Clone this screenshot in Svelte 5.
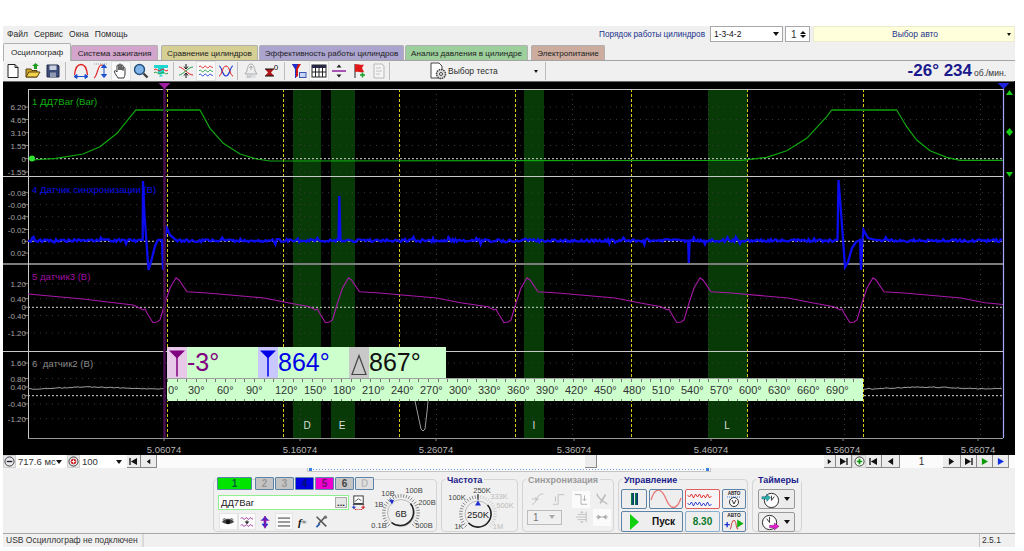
<script lang="ts">
    // Seeded noise so the traces look the same on every run
    let seed = 20531;
    function rnd(): number {
        seed = (seed * 1664525 + 1013904223) % 4294967296;
        return seed / 4294967296;
    }

    const toPoints = (list: number[][]) => list.map(([x, y]) => `${x.toFixed(1)},${y.toFixed(1)}`).join(" ");

    const channels = [
        { name: "1 ДД7Bar (Bar)", color: "#10b010", labelY: 105, base: 158.7,
          ticks: [[6.2, 107], [4.65, 119.5], [3.1, 132.7], [1.55, 145.5], [0, 158.7], [-1.55, 172]] },
        { name: "4 Датчик синхронизации (В)", color: "#0c0ce8", labelY: 193, base: 241.3,
          ticks: [[-0.08, 192.7], [-0.06, 204.7], [-0.04, 216.7], [-0.02, 229.5], [0, 241.3], [0.02, 253.2]] },
        { name: "5 датчик3 (В)", color: "#a010a0", labelY: 280, base: 307.3,
          ticks: [[1.2, 283.7], [0.4, 298.7], [0, 307.3], [-0.4, 315.5], [-1.2, 333]] },
        { name: "6\u00a0\u00a0датчик2 (В)", color: "#8a8a8a", labelY: 367, base: 395.7,
          ticks: [[1.6, 363], [0.8, 378.5], [0.4, 387], [0, 395.7], [-0.4, 404], [-1.2, 418.7]] }
    ];

    const tickLabel = (v: number) => (v === 0 ? "0" : v.toFixed(2));

    const greenLine = toPoints([
        [32, 160], [56, 158.3], [83, 154], [100, 146.7], [117, 133.3], [135.7, 110], [200, 110], [210, 128.3],
        [223.3, 143.3], [240, 154], [256.7, 159], [270, 161], [294, 161], [742, 160.3], [766.7, 157.3], [786.7, 150.7],
        [806.7, 138.3], [826.7, 116.7], [831.7, 110], [896.7, 110], [906.7, 126.7], [916.7, 140], [930, 150.7],
        [946.7, 157.3], [960, 160.3], [1003, 160.3]
    ]);

    // Sync channel: a noisy flat line, broken by the spikes listed here
    const spikes = [
        { from: 142, to: 176, pts: [[142.7, 240], [143, 181], [144.5, 215], [148.5, 270], [151, 262], [155, 246], [158, 240], [162, 240], [163, 270], [165, 238], [167, 228], [170, 235], [176, 240]] },
        { from: 338, to: 342, pts: [[338.5, 240], [339.3, 196], [340.5, 240]] },
        { from: 688, to: 691, pts: [[688.2, 241], [688.8, 263], [689.6, 241]] },
        { from: 837, to: 876, pts: [[837.5, 240], [838.5, 180], [840.5, 205], [845, 267], [848, 262], [852, 248], [856, 242], [860, 240], [861, 270], [862.5, 240], [863.5, 230], [868, 238], [876, 240]] }
    ];
    function blueLine(): string {
        const list: number[][] = [];
        let x = 28;
        while (x < 1003) {
            const spike = spikes.find((s) => x >= s.from && x < s.to);
            if (spike) {
                list.push(...spike.pts);
                x = spike.to;
                continue;
            }
            const kick = rnd() > 0.93 ? 3 : 1;
            list.push([x, 240.6 + (rnd() - 0.5) * 2.8 * kick]);
            x += 1.4;
        }
        return toPoints(list);
    }
    const syncLine = blueLine();

    const magentaLine = (() => {
        const list: number[][] = [[28, 294], [83, 299], [133, 305]];
        for (const t of [154, 326.5, 505, 678, 851]) {
            for (const [dx, y] of [[-17, 306.7], [-11, 310], [-9, 309], [-7, 313], [-1, 322.7], [3, 322], [6, 320], [11, 303], [16, 288], [22, 277.7], [25, 280], [33, 291.7], [53, 293], [110, 298]]) {
                list.push([t + dx, y]);
            }
            list.push([t + 134, 302.7]);
        }
        list.push([1003, 304.5]);
        return toPoints(list.filter((p) => p[0] <= 1003));
    })();

    function greyLine(from: number, to: number): string {
        const list: number[][] = [];
        for (let x = from; x < to; x += 2) {
            list.push([x, 388 + Math.sin(x / 19) * 0.9 + (rnd() - 0.5) * 0.9]);
        }
        return toPoints(list);
    }
    const greyLeft = greyLine(28, 166);
    const greyRight = greyLine(864, 1003);

    const cylinderLines = [167.5, 283.5, 399.5, 515.5, 631.5, 747.5, 863.5];
    const gridLines = [300.5, 436.5, 572.5, 708.5, 844.5, 980.5];
    const bands = [[293, 28, "D", 307], [331, 24, "E", 342], [524, 20, "I", 534], [708, 39.5, "L", 727]];
    const timeLabels = [[164, "5.06074"], [300, "5.16074"], [436, "5.26074"], [574, "5.36074"], [711, "5.46074"], [843, "5.56074"], [978, "5.66074"]];

    const degrees = Array.from({ length: 24 }, (_, i) => `${i * 30}°`);
    const tabs = [
        ["Осциллограф", "active"], ["Система зажигания", "plum"], ["Сравнение цилиндров", "olive"],
        ["Эффективность работы цилиндров", "violet"], ["Анализ давления в цилиндре", "mint"], ["Электропитание", "clay"]
    ];
    const channelButtons = [["1", "on-green"], ["2", "off"], ["3", "off"], ["4", "on-blue"], ["5", "on-pink"], ["6", "off dark"], ["D", "off faint"]];

    /**
     * Radial tick marks round a dial, skipping the gap at the bottom
     */
    function dialTicks(cx: number, cy: number): { x1: number; y1: number; x2: number; y2: number }[] {
        const list = [];
        for (let a = -135; a <= 135; a += 9) {
            const r = (a * Math.PI) / 180;
            list.push({
                x1: cx + Math.sin(r) * 15.5,
                y1: cy - Math.cos(r) * 15.5,
                x2: cx + Math.sin(r) * 19,
                y2: cy - Math.cos(r) * 19
            });
        }
        return list;
    }
</script>

<div class="app">
    <div class="menu-row">
        <div class="menu">
            <span>Файл</span><span>Сервис</span><span>Окна</span><span>Помощь</span>
        </div>
        <div class="order-label">Порядок работы цилиндров</div>
        <div class="field order"><span>1-3-4-2</span><i class="caret"></i></div>
        <div class="field spin"><span>1</span><b class="spin-arrows"><i class="up"></i><i class="caret"></i></b></div>
        <div class="field auto"><span>Выбор авто</span><i class="caret small"></i></div>
    </div>

    <div class="tabs">
        {#each tabs as [title, tone]}
            <div class="tab {tone}">{title}</div>
        {/each}
    </div>

    <div class="toolbar">
        <button class="tool"><svg viewBox="0 0 16 16"><path d="M3 1.5h7l3 3v10H3z" fill="#fff" stroke="#222"/><path d="M10 1.5v3h3" fill="none" stroke="#222"/></svg></button>
        <button class="tool"><svg viewBox="0 0 16 16"><path d="M1 14V6h5l1 1.5h5V14z" fill="#c9a227" stroke="#5a4410"/><path d="M1 14l3-5h11l-3 5z" fill="#f3d24e" stroke="#5a4410"/><path d="M9 6V3H7l3.5-3L14 3h-2v3z" fill="#1e9c22"/></svg></button>
        <button class="tool"><svg viewBox="0 0 16 16"><path d="M2 2h11l1 1v11H2z" fill="#3c4a78" stroke="#222b4c"/><rect x="4.5" y="2.5" width="7" height="4.5" fill="#c8cfdd"/><rect x="5" y="9.5" width="6" height="4.5" fill="#8f98ae"/></svg></button>
        <i class="sep s1"></i>
        <button class="tool"><svg viewBox="0 0 16 16"><path d="M1.5 12C2.5 3 5 1.5 8 1.5S13.500 3 14.500 12" fill="none" stroke="#e02020" stroke-width="1.3"/><path d="M1 13.500h14M1 13.500l3-2v4zM15 13.500l-3-2v4z" fill="#1c50d0" stroke="#1c50d0"/></svg></button>
        <button class="tool"><svg viewBox="0 0 16 16"><path d="M1 15C4 14 5 2 8 2c2 0 2 1 4 1" fill="none" stroke="#e02020" stroke-width="1.2"/><path d="M1 1h14" stroke="#999" stroke-dasharray="1 1"/><path d="M11 3v10M11 1.500l-2.500 3h5zM11 14.500l-2.500-3h5z" fill="#1c50d0" stroke="#1c50d0"/></svg></button>
        <button class="tool on"><svg viewBox="0 0 16 16"><path d="M5 15c-1-2-3-4-3.500-6s1.500-1.500 2.500 0V3c0-1.500 2-1.500 2 0v4-5c0-1.500 2-1.500 2 0v5-4c0-1.500 2-1.500 2 0v4.500-2.500c0-1.500 2-1 2 .5V11c0 2-1 3-1 4z" fill="#fff" stroke="#222" stroke-width=".9"/></svg></button>
        <button class="tool"><svg viewBox="0 0 16 16"><circle cx="6.500" cy="6.500" r="5" fill="#7fb5e8" stroke="#24507e" stroke-width="1.400"/><path d="M10.500 10.500l4 4" stroke="#3d3d3d" stroke-width="2.400"/></svg></button>
        <button class="tool"><svg viewBox="0 0 16 16"><path d="M1 2h14v3H11v6H5V5H1z" fill="#22d6d0"/><path d="M6 13.500L8 11l2 2.500z" fill="#22d6d0"/><path d="M1 7c3-3 4 3 7 0s4 3 7 0" fill="none" stroke="#e02020"/><path d="M1 10c3-3 4 3 7 0s4 3 7 0" fill="none" stroke="#20a040"/></svg></button>
        <i class="sep s2"></i>
        <button class="tool"><svg viewBox="0 0 16 16"><path d="M1 4c4 0 9 8 14 8" fill="none" stroke="#e02020"/><path d="M1 12c4 0 9-8 14-8" fill="none" stroke="#20a040"/><path d="M8 1v4M6 3.500L8 6l2-2.500M8 15v-4M6 12.500L8 10l2 2.500" fill="none" stroke="#111"/></svg></button>
        <button class="tool on"><svg viewBox="0 0 16 16"><path d="M1 4c2-3 3 3 5 0s3 3 5 0 2 2 4 0" fill="none" stroke="#e02020"/><path d="M1 8c2-3 3 3 5 0s3 3 5 0 2 2 4 0" fill="none" stroke="#20a040"/><path d="M1 12c2-3 3 3 5 0s3 3 5 0 2 2 4 0" fill="none" stroke="#2040d0"/></svg></button>
        <button class="tool"><svg viewBox="0 0 16 16"><path d="M1 3c3 0 3 10 7 10s4-10 7-10" fill="none" stroke="#2040d0" stroke-width="1.200"/><path d="M1 13c3 0 3-10 7-10s4 10 7 10" fill="none" stroke="#e02020"/></svg></button>
        <i class="sep s3"></i>
        <button class="tool"><svg viewBox="0 0 16 16"><path d="M8 1c3 0 3.500 4 4 7l2 3H2l2-3c.5-3 1-7 4-7z" fill="#eee" stroke="#aaa"/><path d="M8 3v4M6.500 5L8 3l1.500 2" fill="none" stroke="#aaa"/><text x="8" y="15" class="tiny">АВТО</text></svg></button>
        <button class="tool"><svg viewBox="0 0 16 16"><path d="M2 6h9l-3 3.500 3 3.500H2l3-3.500z" fill="#b01818"/><path d="M2 6h9M2 13h9" stroke="#111"/><text x="13" y="7" class="zero">0</text></svg></button>
        <i class="sep s4"></i>
        <button class="tool"><svg viewBox="0 0 16 16"><path d="M1 1h9L7 6v7L4 15V6z" fill="#d01818"/><path d="M1 1h6L5 6v9L4 15V6z" fill="#1c30d0"/><rect x="8.500" y="9.500" width="6.500" height="5" fill="#c8d4f4" stroke="#3a58b0"/></svg></button>
        <button class="tool on"><svg viewBox="0 0 16 16"><rect x="1" y="2" width="14" height="12" fill="#fff" stroke="#222"/><rect x="1" y="2" width="14" height="3" fill="#2a2a50"/><path d="M4.500 2v12M8 2v12M11.500 2v12M1 9h14" stroke="#222" fill="none"/></svg></button>
        <button class="tool"><svg viewBox="0 0 16 16"><path d="M1 8h14" stroke="#9020a0" stroke-width="1.500"/><path d="M8 1.500l-2.500 3h5zM8 14.500l-2.500-3h5z" fill="#222"/></svg></button>
        <button class="tool"><svg viewBox="0 0 16 16"><path d="M4 1v14" stroke="#222"/><path d="M4 1.500c3-1 5 1 9 0L11 5l2 4c-4 1-6-1-9 0z" fill="#e01818"/><path d="M9 12h5M11.500 9.500v5" stroke="#18a028" stroke-width="1.600"/></svg></button>
        <button class="tool"><svg viewBox="0 0 16 16"><path d="M3 1h8l2 2v12H3z" fill="#f4f4f4" stroke="#b8b8b8"/><path d="M5 5h5M5 8h6M5 11h4" stroke="#c4c4c4"/></svg></button>
        <i class="sep s5"></i>
        <div class="test-select">
            <svg viewBox="0 0 18 18"><path d="M2 1h8l3 3v12H2z" fill="#fff" stroke="#444"/><circle cx="12" cy="12" r="4.500" fill="#ddd" stroke="#444" stroke-dasharray="1.500 .8" stroke-width="1.500"/><circle cx="12" cy="12" r="1.500" fill="#fff" stroke="#444"/></svg>
            <span>Выбор теста</span>
            <i class="caret small"></i>
        </div>
        <i class="sep"></i>
        <div class="readout"><b>-26° 234</b><span>об./мин.</span></div>
    </div>

    <div class="scope">
        <svg class="traces" viewBox="3 81 1011 374">
            <rect x="3" y="81" width="1011" height="374" fill="#000"/>
            <path d="M3 81h1011" stroke="#8a8a8a" stroke-width="1.500"/>
            {#each bands as [x, w, letter, lx]}
                <rect x={x} y="89" width={w} height="349" fill="#083a08"/>
                <text x={lx} y="429" class="band-letter">{letter}</text>
            {/each}
            {#each gridLines as x}
                <path d="M{x} 89V438" stroke="#3c3c3c" stroke-dasharray="1 4"/>
            {/each}
            {#each channels as ch}
                {#each ch.ticks as [value, y]}
                    <path d="M24 {y}H28" stroke="#777"/>
                    {#if value === 0}
                        <path d="M28 {y}H1003" stroke="#d4d4d4" stroke-dasharray="2 2"/>
                    {:else}
                        <path d="M28 {y}H1003" stroke="#3a3a3a" stroke-dasharray="1 5"/>
                    {/if}
                    <text x="26" y={y + 3} class="tick">{tickLabel(value)}</text>
                {/each}
                <text x="32" y={ch.labelY} class="ch-name" fill={ch.color}>{ch.name}</text>
            {/each}
            {#each cylinderLines as x}
                <path d="M{x} 89V438" stroke="#d8c818" stroke-dasharray="3 2"/>
            {/each}

            <path d="M28 89.500H1003M3 176.500H1003M3 351.500H1003" stroke="#c8c8c8" stroke-width="1"/>
            <path d="M3 264H1003" stroke="#7c7c7c" stroke-width="2"/>
            <path d="M28 438.500H1003" stroke="#9a9a9a"/>
            <path d="M28.500 89V438" stroke="#c8c8c8"/>

            <polyline points={greenLine} fill="none" stroke="#0ea80e" stroke-width="1.200"/>
            <path d="M136 110H200M832 110H897" stroke="#0a7a0a" stroke-width="1.800"/>
            <circle cx="32" cy="158.500" r="3" fill="#30e030"/>
            <polyline points={syncLine} fill="none" stroke="#0c0cf0" stroke-width="2.300"/>
            <polyline points={magentaLine} fill="none" stroke="#a818a8" stroke-width="1.100"/>
            <polyline points={greyLeft} fill="none" stroke="#9a9a9a"/>
            <polyline points={greyRight} fill="none" stroke="#9a9a9a"/>
            <polyline points="415,401 418,415 421,429 423,431 425,429 427,412 428,401" fill="none" stroke="#9a9a9a"/>

            <path d="M164.500 88V438" stroke="#4a1050" stroke-width="2.500"/>
            <path d="M158.500 83h12l-6 6z" fill="#a020a0"/>
            <path d="M1003.500 88V438" stroke="#a8a8ff" stroke-width="1.200"/>
            <path d="M997.500 83h12l-6 6z" fill="#2020e0"/>

            <path d="M1006 95h7l-3.500-5z" fill="#18d018"/>
            <path d="M1009.500 128l3.500 4-3.500 4-3.500-4z" fill="#18d018"/>
            <path d="M1006 172h7l-3.500 5z" fill="#18d018"/>

            {#each timeLabels as [x, label]}
                <path d="M{x} 438v3" stroke="#888"/>
                <text x={x} y="453" class="time">{label}</text>
            {/each}
        </svg>

        <div class="angles">
            <div class="angle-head">
                <span class="mark pink"><svg viewBox="0 0 20 30"><path d="M2 3h16l-8 8z" fill="#800080"/><path d="M10 8v21" stroke="#800080" stroke-width="1.500"/></svg></span>
                <span class="deg purple">-3°</span>
                <span class="mark lilac"><svg viewBox="0 0 20 30"><path d="M2 3h16l-8 8z" fill="#0000e8"/><path d="M10 8v21" stroke="#0000e8" stroke-width="1.500"/></svg></span>
                <span class="deg blue">864°</span>
                <span class="mark grey"><svg viewBox="0 0 20 30"><path d="M10 8l7 19H3z" fill="none" stroke="#444" stroke-width="1.200"/></svg></span>
                <span class="deg last">867°</span>
            </div>
            <div class="angle-scale">
                {#each degrees as label}
                    <span>{label}</span>
                {/each}
            </div>
        </div>
    </div>

    <div class="scroll-row">
        <button class="round-btn"><svg viewBox="0 0 12 12"><circle cx="6" cy="6" r="5" fill="#e8e8f0" stroke="#333"/><path d="M3 6h6" stroke="#222" stroke-width="1.500"/></svg></button>
        <div class="scale-pick wide"><span>717.6 мс</span><i class="caret"></i></div>
        <button class="round-btn"><svg viewBox="0 0 12 12"><circle cx="6" cy="6" r="5" fill="#e8e8f0" stroke="#333"/><circle cx="6" cy="6" r="3" fill="#d02020"/><path d="M4 6h4M6 4v4" stroke="#fff"/></svg></button>
        <div class="scale-pick"><span>100</span><i class="caret"></i></div>
        <button class="nav w14"><svg viewBox="0 0 10 8"><path d="M1 0v8" stroke="#111" stroke-width="1.500"/><path d="M9 0v8L2 4z" fill="#111"/></svg></button>
        <button class="nav w16"><svg viewBox="0 0 10 8"><path d="M7 1v6L3 4z" fill="#111"/></svg></button>
        <div class="slider"><i class="thumb"></i></div>
        <button class="nav w12"><svg viewBox="0 0 10 8"><path d="M3 1v6l4-3z" fill="#111"/></svg></button>
        <button class="nav w16"><svg viewBox="0 0 10 8"><path d="M1 0v8l7-4z" fill="#111"/><path d="M9 0v8" stroke="#111" stroke-width="1.500"/></svg></button>
        <button class="round-btn plain"><svg viewBox="0 0 12 12"><circle cx="6" cy="6" r="5" fill="#f0fff0" stroke="#333"/><path d="M3 6h6M6 3v6" stroke="#109010" stroke-width="1.800"/></svg></button>
        <button class="nav w16"><svg viewBox="0 0 10 8"><path d="M1 0v8" stroke="#111" stroke-width="1.500"/><path d="M9 0v8L2 4z" fill="#111"/></svg></button>
        <button class="nav w18"><svg viewBox="0 0 10 8"><path d="M8 0v8L2 4z" fill="#111"/></svg></button>
        <div class="page-num">1</div>
        <button class="nav w18"><svg viewBox="0 0 10 8"><path d="M2 0v8l6-4z" fill="#111"/></svg></button>
        <button class="nav w16"><svg viewBox="0 0 10 8"><path d="M1 0v8l7-4z" fill="#111"/><path d="M9 0v8" stroke="#111" stroke-width="1.500"/></svg></button>
        <button class="nav w16"><svg viewBox="0 0 10 8"><path d="M2 0v8l7-4z" fill="#0a9a0a"/></svg></button>
        <button class="nav w16"><svg viewBox="0 0 10 8"><path d="M2 0v8l7-4z" fill="#1030e0"/></svg></button>
    </div>

    <div class="band-row">
        <div class="band-track"><i class="band-dot l"></i><i class="band-dots"></i><i class="band-dot r"></i></div>
    </div>

    <div class="panel">
        <div class="group g-input">
            <div class="input-col">
                <div class="channel-row">
                    {#each channelButtons as [label, tone]}
                        <button class="ch {tone}">{label}</button>
                    {/each}
                </div>
                <div class="name-row">
                    <div class="name-field"><span>ДД7Bar</span><button class="dots">...</button></div>
                    <svg class="name-icon" viewBox="0 0 16 16"><rect x="3" y="1" width="10" height="8" fill="#fff" stroke="#333"/><path d="M4 7l4-3 3 2" fill="none" stroke="#555"/><path d="M2 10h12" stroke="#333"/><path d="M3 13a5 3 0 0 0 10 0" fill="none" stroke="#d02020"/><path d="M1 13h4M3 11v4" stroke="#1c30d0"/><path d="M11 13h4M13 11v4" stroke="#d02020"/></svg>
                </div>
                <div class="icon-row">
                    <button class="mini on"><svg viewBox="0 0 16 16"><path d="M1 8c4-5 10-5 14 0-4 3-10 3-14 0z" fill="#444"/><circle cx="8" cy="8" r="2.500" fill="#111"/><path d="M2 5l3-1M14 5l-3-1" stroke="#444"/></svg></button>
                    <button class="mini on"><svg viewBox="0 0 16 16"><path d="M1 4c2-3 3 3 5 0s3 3 5 0 2 2 4 0" fill="none" stroke="#901090"/><path d="M1 12c2-3 3 3 5 0s3 3 5 0 2 2 4 0" fill="none" stroke="#901090"/><path d="M8 6v3M6 7.500L8 10l2-2.500" fill="#222" stroke="#222"/></svg></button>
                    <button class="mini"><svg viewBox="0 0 16 16"><path d="M8 1l-4 5h2.500v4H4l4 5 4-5H9.500V6H12z" fill="#2030d0"/><path d="M8 1v14" stroke="#a010a0" stroke-width="1.500"/><path d="M3 6h10" stroke="#a010a0"/></svg></button>
                    <button class="mini on"><svg viewBox="0 0 16 16"><path d="M1 3.500h14M1 8h14M1 12.500h14" stroke="#222" stroke-dasharray="14 0"/></svg></button>
                    <button class="mini fx">f<small>∞</small></button>
                    <button class="mini"><svg viewBox="0 0 16 16"><path d="M3 2l11 11" stroke="#555" stroke-width="1.800"/><path d="M13 2L5 10" stroke="#555" stroke-width="1.800"/><path d="M6 9l-4 4 1.500 1.500 4-4z" fill="#2c5fb0"/><circle cx="13" cy="2.500" r="2" fill="#777"/></svg></button>
                </div>
            </div>
            <svg class="dial d-volts" viewBox="0 0 66 54">
                {#each dialTicks(30, 34) as t}
                    <line x1={t.x1} y1={t.y1} x2={t.x2} y2={t.y2} stroke="#8a8a8a"/>
                {/each}
                <circle cx="30" cy="34" r="13.500" fill="#efefef" stroke="#bbb"/>
                <path d="M20.500 43.500A13.500 13.500 0 0 0 39.500 24.500" fill="none" stroke="#222" stroke-width="1.600"/>
                <path d="M18 20.500l5 .5-2 4.500z" fill="#2030d0"/>
                <text x="30" y="37.500" class="dial-big">6В</text>
                <text x="17" y="16.500" class="dial-label">10В</text>
                <text x="43" y="14" class="dial-label">100В</text>
                <text x="8" y="28" class="dial-label">1В</text>
                <text x="56" y="26" class="dial-label">200В</text>
                <text x="8" y="49" class="dial-label">0.1В</text>
                <text x="53" y="49" class="dial-label">500В</text>
            </svg>
        </div>

        <div class="group g-freq">
            <div class="legend">Частота</div>
            <svg class="dial d-freq" viewBox="0 0 76 50">
                {#each dialTicks(36, 32) as t, i}
                    <line x1={t.x1} y1={t.y1} x2={t.x2} y2={t.y2} stroke={i > 15 ? "#cfcfcf" : "#8a8a8a"}/>
                {/each}
                <circle cx="36" cy="32" r="13" fill="#efefef" stroke="#bbb"/>
                <path d="M26.500 41A13 13 0 0 0 45.500 23" fill="none" stroke="#222" stroke-width="1.600"/>
                <path d="M36 18.500l3 5h-6z" fill="#2030d0"/>
                <path d="M36 12v6" stroke="#222"/>
                <text x="40" y="10.500" class="dial-label">250K</text>
                <text x="36" y="35.500" class="dial-big">250K</text>
                <text x="15" y="18" class="dial-label">100K</text>
                <text x="57" y="17" class="dial-label faint">333K</text>
                <text x="63" y="26" class="dial-label faint">500K</text>
                <text x="17" y="46.500" class="dial-label">1K</text>
                <text x="56" y="46.500" class="dial-label faint">1M</text>
            </svg>
        </div>

        <div class="group g-sync">
            <div class="legend muted">Синхронизация</div>
            <div class="sync-grid">
                <svg viewBox="0 0 16 16"><path d="M1 14c6 0 4-12 13-12" fill="none" stroke="#bbb"/><path d="M1 8h8M5 6l2 4" stroke="#bbb"/></svg>
                <svg viewBox="0 0 16 16"><path d="M1 14h6V3h7" fill="none" stroke="#bbb"/><path d="M4 5v6" stroke="#bbb"/></svg>
                <span class="sync-on"><svg viewBox="0 0 16 16"><path d="M1 3h7v11h7" fill="none" stroke="#aaa"/><path d="M12 4v6M10 8l2 2 2-2" fill="none" stroke="#aaa"/></svg></span>
                <svg viewBox="0 0 16 16"><path d="M2 2c3 8 8 8 12 12" fill="none" stroke="#bbb" stroke-width="1.500"/><path d="M6 13l6-10" stroke="#bbb" stroke-width="2"/></svg>
                <div class="sync-pick"><span>1</span><i class="caret pale"></i></div>
                <svg viewBox="0 0 16 16"><path d="M14 2v12M14 5H4M14 8H2M14 11H4" fill="none" stroke="#bbb"/><path d="M9 1l-2 2h4zM9 15l-2-2h4z" fill="#bbb"/></svg>
                <span class="sync-on"><svg viewBox="0 0 16 16"><path d="M1 8h14" stroke="#aaa"/><path d="M3 5l4 3-4 3zM13 5L9 8l4 3z" fill="#aaa"/></svg></span>
            </div>
        </div>

        <div class="group g-run">
            <div class="legend">Управление</div>
            <div class="run-grid">
                <button class="run pause"><i></i><i></i></button>
                <button class="run sine"><svg viewBox="0 0 32 18"><path d="M1 10C5-3 11-3 16 9s11 11 15-1" fill="none" stroke="#e87878" stroke-width="1.300"/></svg></button>
                <button class="run noise"><svg viewBox="0 0 32 18"><path d="M1 5l2 2 2-3 2 4 2-4 2 3 2-3 2 4 2-3 2 3 2-4 2 4 2-2" fill="none" stroke="#e02020" stroke-width=".9"/><path d="M1 13l2 2 2-3 2 4 2-4 2 3 2-3 2 4 2-3 2 3 2-4 2 4 2-2" fill="none" stroke="#2030d0" stroke-width=".9"/></svg></button>
                <button class="run tall"><svg viewBox="0 0 20 18"><text x="10" y="5" class="auto-text">АВТО</text><circle cx="10" cy="12" r="4.500" fill="#fff" stroke="#333"/><path d="M3 7h14" stroke="#4080e0" stroke-dasharray="1 1"/><path d="M8 10l2 4 2-4" fill="none" stroke="#333"/></svg></button>
                <button class="run start"><svg viewBox="0 0 12 18"><path d="M2 1v16l9-8z" fill="#10d010"/></svg><span>Пуск</span></button>
                <button class="run time-value">8.30</button>
                <button class="run tall"><svg viewBox="0 0 20 18"><text x="10" y="5" class="auto-text">АВТО</text><path d="M1 12h5M3.500 9.500v5" stroke="#2030d0" stroke-width="1.300"/><path d="M6 16c2 0 1-8 4-8s1 8 4 8" fill="none" stroke="#d05050"/><path d="M13 7v8l6-4z" fill="#10b010"/></svg></button>
            </div>
        </div>

        <div class="group g-time">
            <div class="legend">Таймеры</div>
            <button class="timer"><svg viewBox="0 0 20 20"><circle cx="11" cy="11" r="7.500" fill="#fff" stroke="#222"/><path d="M11 11l3-4M11 11v-5" stroke="#333"/><path d="M1 7h5V4.500L10 8l-4 4V9.500H1z" fill="#28b4b0" stroke="#2a5a70" stroke-width=".5"/></svg><i class="caret"></i></button>
            <button class="timer"><svg viewBox="0 0 20 20"><circle cx="9" cy="10" r="7.500" fill="#fff" stroke="#222"/><path d="M9 10l-3-4M9 10v-6" stroke="#333"/><path d="M9 13h5v-2.500l5 3.500-5 4v-2.500H9z" fill="#e020d0" stroke="#802070" stroke-width=".5"/></svg><i class="caret"></i></button>
        </div>
    </div>

    <div class="status">
        <div class="status-text">USB Осциллограф не подключен</div>
        <div class="status-fill"></div>
        <div class="status-version">2.5.1</div>
    </div>
</div>

<style>
    :global(body) {
        background: #fff;
    }

    .app {
        width: 1012px;
        margin: 26px 0 0 3px;
        background: #f0f0f0;
        font: 8.5px "Liberation Sans", Arial, sans-serif;
        color: #333;
        display: flex;
        flex-direction: column;
    }

    button {
        font: inherit;
        padding: 0;
        margin: 0;
        border: 0;
        background: none;
        color: inherit;
    }

    svg {
        display: block;
    }

    i {
        display: block;
    }

    .caret {
        width: 0;
        height: 0;
        border-left: 3.5px solid transparent;
        border-right: 3.5px solid transparent;
        border-top: 4px solid #111;
    }

    .caret.small {
        border-left-width: 2.5px;
        border-right-width: 2.5px;
        border-top-width: 3px;
    }

    .caret.pale {
        border-top-color: #aaa;
    }

    /* top row */
    .menu-row {
        height: 16px;
        display: flex;
        align-items: center;
    }

    .menu {
        display: flex;
        gap: 6px;
        padding-left: 4px;
        flex: 1;
        color: #2c2c2c;
    }

    .order-label {
        color: #22348c;
        margin-right: 5px;
        font-size: 8.2px;
    }

    .field {
        height: 16px;
        box-sizing: border-box;
        background: #fff;
        border: 1px solid #a8a8a8;
        display: flex;
        align-items: center;
        justify-content: space-between;
        padding: 0 3px;
    }

    .order {
        width: 73px;
        color: #111;
    }

    .spin {
        width: 25px;
        margin-left: 2px;
        font-size: 10px;
        padding: 0 3px 0 5px;
    }

    .spin-arrows {
        display: flex;
        flex-direction: column;
        gap: 1px;
    }

    .spin-arrows .caret {
        border-left-width: 3px;
        border-right-width: 3px;
        border-top-width: 3px;
    }

    .spin-arrows .up {
        width: 0;
        border-left: 3px solid transparent;
        border-right: 3px solid transparent;
        border-bottom: 3px solid #111;
    }

    .auto {
        width: 202px;
        margin-left: 3px;
        background: #ffffdc;
        border-color: #ececd0;
        color: #22348c;
    }

    .auto span {
        flex: 1;
        text-align: center;
        padding-left: 6px;
    }

    /* tabs */
    .tabs {
        height: 19px;
        display: flex;
        align-items: flex-end;
        border-bottom: 1px solid #a4a4a4;
        box-sizing: border-box;
        font-size: 8.1px;
    }

    .tab {
        height: 15px;
        line-height: 15px;
        margin-right: 1px;
        border: 1px solid #b0b0b0;
        border-bottom: 0;
        border-radius: 2px 2px 0 0;
        color: #222;
        white-space: nowrap;
        text-align: center;
        box-sizing: border-box;
    }

    .active {
        width: 68px;
        height: 18px;
        line-height: 17px;
        background: #f4f4f4;
        margin-bottom: -1px;
        margin-right: 0;
    }

    .plum {
        width: 87px;
        background: #d3a4cc;
        margin-right: 3px;
    }

    .olive {
        width: 97px;
        background: #d6cf93;
    }

    .violet {
        width: 145px;
        background: #aba4cf;
    }

    .mint {
        width: 123px;
        background: #9ccf9c;
        margin-right: 3px;
    }

    .clay {
        width: 74px;
        background: #cbac9e;
    }

    /* toolbar */
    .toolbar {
        height: 20px;
        display: flex;
        align-items: center;
    }

    .tool {
        width: 20px;
        height: 20px;
        display: flex;
        align-items: center;
        justify-content: center;
        flex: none;
    }

    .tool svg {
        width: 16px;
        height: 16px;
    }

    .tool.on {
        background: #fafafa;
        box-shadow: inset 0 0 0 1px #e2e2e2;
    }

    .tiny {
        font-size: 3.5px;
        text-anchor: middle;
        fill: #aaa;
    }

    .zero {
        font-size: 8px;
        text-anchor: middle;
        fill: #111;
    }

    .sep {
        width: 1px;
        height: 18px;
        background: #bcbcbc;
        flex: none;
    }

    .s1 {
        margin: 0 5px 0 2px;
    }

    .s2 {
        margin: 0 2px 0 2px;
    }

    .s3 {
        margin: 0 3px 0 1px;
    }

    .s4 {
        margin: 0 4px 0 3px;
    }

    .s5 {
        margin: 0;
    }

    .test-select {
        width: 155px;
        display: flex;
        align-items: center;
        padding-left: 39px;
        box-sizing: border-box;
        color: #2a2a2a;
    }

    .test-select svg {
        width: 18px;
        height: 18px;
        margin-right: 1px;
        flex: none;
    }

    .test-select .caret {
        margin-left: auto;
        margin-right: 7px;
    }

    .readout {
        margin-left: auto;
        padding-right: 9px;
        color: #1a1a8c;
        display: flex;
        align-items: baseline;
        gap: 2px;
    }

    .readout b {
        font-size: 17px;
    }

    .readout span {
        font-size: 8.5px;
        color: #333;
    }

    /* oscilloscope */
    .scope {
        position: relative;
        height: 374px;
        background: #000;
    }

    .traces {
        width: 1011px;
        height: 374px;
    }

    .tick {
        font-size: 8px;
        fill: #a4a4a4;
        text-anchor: end;
    }

    .ch-name {
        font-size: 9.6px;
    }

    .time {
        font-size: 9.5px;
        fill: #b4b4b4;
        text-anchor: middle;
    }

    .band-letter {
        font-size: 10px;
        fill: #ddd;
        text-anchor: middle;
    }

    .angles {
        position: absolute;
        left: 164px;
        top: 266px;
        width: 696px;
    }

    .angle-head {
        width: 279px;
        height: 31px;
        background: #ccffcc;
        display: flex;
        align-items: center;
    }

    .mark {
        width: 20px;
        height: 31px;
        flex: none;
    }

    .mark svg {
        width: 20px;
        height: 31px;
    }

    .pink {
        background: #e8c8e8;
    }

    .lilac {
        background: #c8c8ff;
    }

    .grey {
        background: #c8c8c8;
    }

    .deg {
        width: 71px;
        font-size: 25px;
        flex: none;
    }

    .last {
        width: auto;
        color: #111;
    }

    .purple {
        color: #800080;
    }

    .blue {
        color: #0000e8;
    }

    .angle-scale {
        height: 22px;
        display: flex;
        align-items: center;
        font-size: 11px;
        color: #333;
        background-color: #ccffcc;
        border-top: 1px solid #a0a0a0;
        background-image:
            repeating-linear-gradient(90deg, #777 0 1px, transparent 1px 9.667px),
            repeating-linear-gradient(90deg, #777 0 1px, transparent 1px 9.667px);
        background-size: 100% 3px, 100% 2px;
        background-position: 0 0, 0 100%;
        background-repeat: no-repeat;
    }

    .angle-scale span {
        width: 29px;
        flex: none;
    }

    .angle-scale span:first-child {
        width: 21px;
        padding-left: 1px;
        box-sizing: border-box;
    }

    /* scroll row */
    .scroll-row {
        height: 13px;
        display: flex;
        align-items: stretch;
        background: #fbfbfb;
    }

    .round-btn {
        width: 13px;
        background: #e8e8e8;
        box-shadow: inset 0 0 0 1px #d0d0d0;
        display: flex;
        align-items: center;
        justify-content: center;
        flex: none;
    }

    .round-btn svg {
        width: 11px;
        height: 11px;
    }

    .round-btn.plain {
        width: 14px;
    }

    .scale-pick {
        width: 45px;
        display: flex;
        align-items: center;
        justify-content: space-between;
        padding: 0 3px 0 2px;
        box-sizing: border-box;
        font-size: 9.5px;
        background: #fff;
        white-space: nowrap;
        flex: none;
    }

    .scale-pick.wide {
        width: 49px;
        margin-right: 2px;
    }

    .nav {
        height: 13px;
        background: #ececec;
        border-right: 1px solid #888;
        border-bottom: 1px solid #888;
        box-sizing: border-box;
        display: flex;
        align-items: center;
        justify-content: center;
        flex: none;
    }

    .nav svg {
        width: 9px;
        height: 7px;
    }

    .w12 {
        width: 12px;
    }

    .w14 {
        width: 14px;
        margin-left: 2px;
    }

    .w16 {
        width: 16px;
    }

    .w18 {
        width: 18px;
    }

    .slider {
        width: 667px;
        padding-left: 428px;
        box-sizing: border-box;
        flex: none;
    }

    .thumb {
        width: 12px;
        height: 13px;
        background: #ececec;
        border-right: 1px solid #888;
        border-bottom: 1px solid #888;
        box-sizing: border-box;
    }

    .page-num {
        width: 43px;
        text-align: center;
        line-height: 13px;
        font-size: 10px;
        flex: none;
    }

    /* dotted range band */
    .band-row {
        height: 4px;
        padding-left: 304px;
    }

    .band-track {
        width: 404px;
        height: 4px;
        box-sizing: border-box;
        border: 1px solid #c4c4c4;
        border-top: 0;
        background: #fafafa;
        display: flex;
        align-items: center;
    }

    .band-dots {
        flex: 1;
        height: 1px;
        background: repeating-linear-gradient(90deg, #6a9ae0 0 1px, transparent 1px 3px);
    }

    .band-dot {
        width: 3px;
        height: 3px;
        background: #3a80e0;
        margin: 0 1px;
    }

    /* lower panel */
    .panel {
        height: 61px;
        display: flex;
        align-items: flex-start;
        padding: 7px 0 0 210px;
        box-sizing: border-box;
    }

    .group {
        height: 53px;
        border: 1px solid #d4d4d4;
        border-radius: 4px;
        box-sizing: border-box;
        flex: none;
        margin-right: 4px;
    }

    .legend {
        width: fit-content;
        margin: -5px 0 0 3px;
        padding: 0 2px;
        background: #f0f0f0;
        font-size: 9px;
        line-height: 11px;
        font-weight: bold;
        color: #1c1c8c;
    }

    .muted {
        color: #9a9a9a;
    }

    .g-input {
        width: 224px;
        display: flex;
    }

    .input-col {
        width: 158px;
        margin: -3px 0 0 3px;
        flex: none;
    }

    .channel-row {
        display: flex;
        gap: 1px;
    }

    .ch {
        width: 19px;
        height: 13px;
        box-sizing: border-box;
        border: 1px solid #5c84a8;
        border-radius: 1px;
        font-size: 10px;
        line-height: 11px;
        font-weight: bold;
        text-align: center;
    }

    .on-green {
        width: 35px;
        margin-right: 2px;
        background: #00e400;
        color: #063;
    }

    .on-blue {
        background: #0000e0;
        color: #001070;
    }

    .on-pink {
        background: #f000d0;
        color: #701070;
    }

    .off {
        background: #c4c4c4;
        color: #999;
    }

    .off.dark {
        color: #444;
    }

    .off.faint {
        background: #e0e0e0;
        color: #bbb;
    }

    .name-row {
        display: flex;
        align-items: center;
        margin: 5px 0 2px 1px;
    }

    .name-field {
        width: 131px;
        height: 15px;
        box-sizing: border-box;
        border: 1px solid #90f090;
        background: #fff;
        display: flex;
        align-items: center;
        justify-content: space-between;
        padding-left: 2px;
        font-size: 9.5px;
        color: #222;
    }

    .dots {
        width: 12px;
        height: 11px;
        margin-right: 1px;
        line-height: 6px;
        background: #e6e6e6;
        border: 1px solid #aaa;
        box-sizing: border-box;
        font-weight: bold;
    }

    .name-icon {
        width: 15px;
        height: 15px;
        margin-left: 2px;
    }

    .icon-row {
        display: flex;
        margin-top: 3px;
    }

    .mini {
        width: 18.5px;
        height: 17px;
        display: flex;
        align-items: center;
        justify-content: center;
        flex: none;
    }

    .mini svg {
        width: 14px;
        height: 14px;
    }

    .mini.on {
        background: #fbfbfb;
        box-shadow: inset 0 0 0 1px #e4e4e4;
    }

    .icon-row .mini:first-child {
        margin-left: 2px;
    }

    .fx {
        font: italic bold 11px "Liberation Serif", serif;
        color: #111;
    }

    .fx small {
        font-size: 7px;
    }

    .dial {
        flex: none;
    }

    .d-volts {
        width: 66px;
        height: 54px;
        margin: -1px 0 0 -4px;
    }

    .dial-label {
        font-size: 7.5px;
        fill: #444;
        text-anchor: middle;
    }

    .dial-label.faint {
        fill: #bcbcbc;
    }

    .dial-big {
        font-size: 9.5px;
        fill: #222;
        text-anchor: middle;
    }

    .g-freq {
        width: 77px;
    }

    .d-freq {
        width: 76px;
        height: 50px;
        margin-top: -4px;
    }

    .g-sync {
        width: 92px;
    }

    .sync-grid {
        display: grid;
        grid-template-columns: 21px 22px 22px 20px;
        grid-auto-rows: 18px;
        justify-items: center;
        align-items: center;
        margin: 4px 0 0 4px;
    }

    .sync-grid svg {
        width: 14px;
        height: 14px;
    }

    .sync-on {
        width: 18px;
        height: 17px;
        background: #fbfbfb;
        display: flex;
        align-items: center;
        justify-content: center;
    }

    .sync-pick {
        grid-column: span 2;
        justify-self: start;
        width: 35px;
        height: 15px;
        box-sizing: border-box;
        border: 1px solid #bcbcbc;
        display: flex;
        align-items: center;
        justify-content: space-between;
        padding: 0 6px 0 5px;
        font-size: 10px;
        color: #777;
    }

    .g-run {
        width: 130px;
    }

    .run-grid {
        display: grid;
        grid-template-columns: 26px 34px 35px 24px;
        grid-template-rows: 20px 21px;
        gap: 2px 2px;
        margin: 3px 0 0 2px;
    }

    .run {
        box-sizing: border-box;
        border: 1px solid #5c84a8;
        border-radius: 2px;
        display: flex;
        align-items: center;
        justify-content: center;
        background: #eeeeee;
        overflow: hidden;
    }

    .run svg {
        width: 100%;
        height: 100%;
    }

    .auto-text {
        font-size: 4.6px;
        font-weight: bold;
        fill: #222;
        text-anchor: middle;
    }

    .pause {
        gap: 1px;
    }

    .pause i {
        width: 3px;
        height: 12px;
        background: linear-gradient(90deg, #0a8a30, #0a2a8a);
    }

    .noise {
        border-color: #e06060;
        background: #f6f6f6;
    }

    .start {
        grid-column: span 2;
        justify-content: flex-start;
        padding-left: 6px;
        font-size: 10px;
        font-weight: bold;
        color: #111;
    }

    .start svg {
        width: 12px;
        height: 18px;
        flex: none;
    }

    .start span {
        margin-left: 12px;
    }

    .time-value {
        font-size: 10px;
        font-weight: bold;
        color: #0a7a2a;
        border-color: #88aed0;
    }

    .g-time {
        width: 50px;
        margin-right: 0;
    }

    .timer {
        width: 37px;
        height: 20px;
        margin: 3px 0 0 5px;
        box-sizing: border-box;
        border: 1px solid #999;
        border-radius: 2px;
        background: #ececec;
        display: flex;
        align-items: center;
        padding-left: 2px;
        gap: 4px;
    }

    .timer svg {
        width: 19px;
        height: 19px;
        flex: none;
    }

    /* status bar */
    .status {
        height: 14px;
        display: flex;
        border-top: 1px solid #a8a8a8;
        box-sizing: border-box;
        line-height: 13px;
    }

    .status-text {
        width: 141px;
        padding-left: 3px;
        box-sizing: border-box;
        border-right: 2px solid #dadada;
        white-space: nowrap;
    }

    .status-fill {
        flex: 1;
    }

    .status-version {
        width: 36px;
        padding-left: 2px;
        box-sizing: border-box;
        border-left: 1px solid #c4c4c4;
    }
</style>
